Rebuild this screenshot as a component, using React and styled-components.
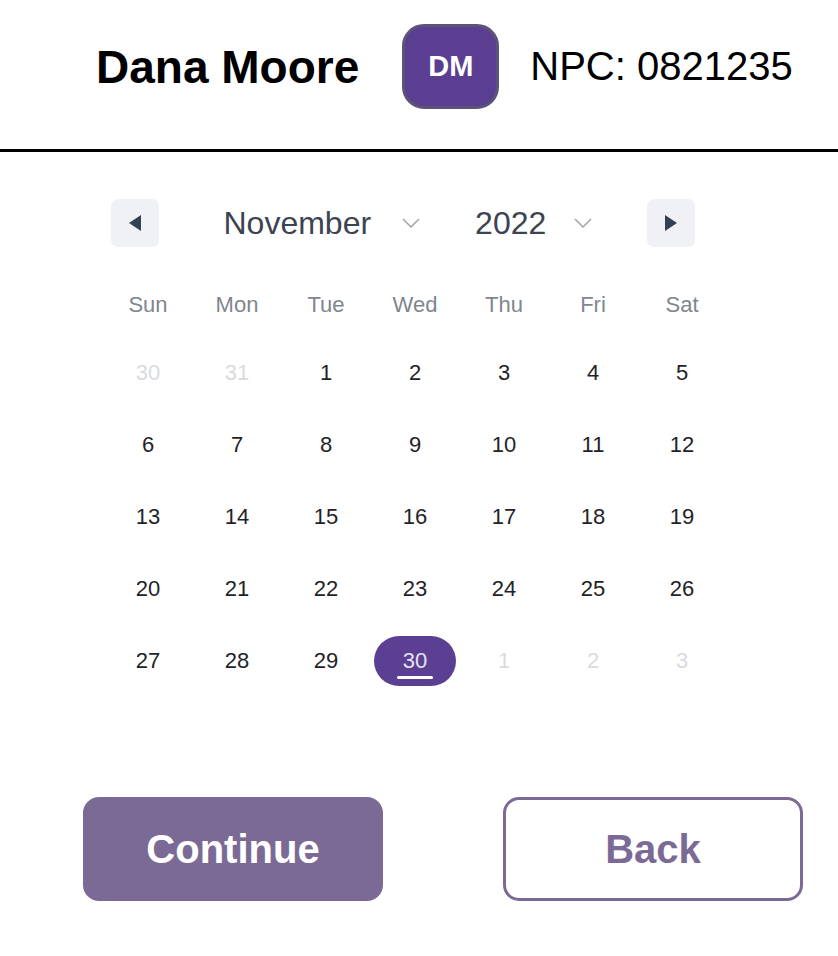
import React from 'react'
import styled, { createGlobalStyle } from 'styled-components'

const GlobalStyle = createGlobalStyle`
  body {
    margin: 0;
    background: #fff;
    font-family: "Liberation Sans", Arial, sans-serif;
  }
`

const Page = styled.div`
  width: 838px;
  min-height: 956px;
  background: #fff;
`

const Header = styled.header`
  display: flex;
  align-items: center;
  padding: 24px 0 40px 96px;
  border-bottom: 3px solid #000;
`

const Name = styled.h1`
  margin: 0 43px 0 0;
  font-size: 46px;
  font-weight: 700;
  color: #000;
`

const Avatar = styled.div`
  width: 91px;
  height: 79px;
  border: 3px solid #5c5478;
  border-radius: 22px;
  background: #5a3e91;
  color: #fff;
  font-size: 29px;
  font-weight: 700;
  display: flex;
  align-items: center;
  justify-content: center;
  margin-right: 31px;
`

const Npc = styled.div`
  font-size: 40px;
  color: #000;
`

const Calendar = styled.section`
  width: 623px;
  margin: 47px 0 0 103.5px;
`

const Nav = styled.div`
  display: flex;
  align-items: center;
  padding-left: 7px;
  height: 48px;
`

const NavButton = styled.button`
  width: 48px;
  height: 48px;
  border: none;
  border-radius: 7px;
  background: #f0f1f5;
  display: flex;
  align-items: center;
  justify-content: center;
  padding: 0;
  margin-left: ${p => p.$offset || 0}px;
  cursor: pointer;
`

const Select = styled.div`
  display: flex;
  align-items: center;
  gap: ${p => p.$gap}px;
  margin-left: ${p => p.$offset}px;
  font-size: 32px;
  color: #3d4451;
`

const Grid = styled.div`
  display: grid;
  grid-template-columns: repeat(7, 89px);
  margin-top: 40px;
`

const DayName = styled.div`
  height: 36px;
  margin-bottom: 14px;
  display: flex;
  align-items: center;
  justify-content: center;
  font-size: 22px;
  color: #7f868d;
`

const Cell = styled.div`
  height: 72px;
  display: flex;
  align-items: center;
  justify-content: center;
`

const Day = styled.span`
  position: relative;
  width: 82px;
  height: 50px;
  border-radius: 25px;
  display: flex;
  align-items: center;
  justify-content: center;
  font-size: 22px;
  color: ${p => (p.$muted ? '#d7dbe0' : p.$selected ? '#e6e1f2' : '#1f2328')};
  background: ${p => (p.$selected ? '#5b3f92' : 'transparent')};

  ${p => p.$selected && `
    &::after {
      content: '';
      position: absolute;
      left: 23px;
      right: 23px;
      bottom: 7px;
      height: 3px;
      border-radius: 2px;
      background: #fff;
    }
  `}
`

const Actions = styled.div`
  display: flex;
  gap: 120px;
  padding-left: 83px;
  margin-top: 100px;
`

const Button = styled.button`
  width: 300px;
  height: 104px;
  border-radius: 16px;
  font-family: "Liberation Sans", Arial, sans-serif;
  font-size: 40px;
  font-weight: 700;
  cursor: pointer;
  border: 3px solid #7b6a96;
  background: ${p => (p.$outline ? '#fff' : '#7b6a96')};
  color: ${p => (p.$outline ? '#7b6a96' : '#fff')};
`

const Triangle = ({ dir }) => (
  <svg width="12" height="16" viewBox="0 0 12 16">
    <path d={dir === 'left' ? 'M12 0 L0 8 L12 16 Z' : 'M0 0 L12 8 L0 16 Z'} fill="#334155" />
  </svg>
)

const Chevron = () => (
  <svg width="18" height="10" viewBox="0 0 18 10">
    <path d="M1 1 L9 9 L17 1" fill="none" stroke="#a3a8ae" strokeWidth="1.6" />
  </svg>
)

const dayNames = ['Sun', 'Mon', 'Tue', 'Wed', 'Thu', 'Fri', 'Sat']

const days = [
  { n: 30, muted: true }, { n: 31, muted: true },
  ...Array.from({ length: 30 }, (_, i) => ({ n: i + 1, selected: i === 29 })),
  { n: 1, muted: true }, { n: 2, muted: true }, { n: 3, muted: true },
]

const App = () => {
  return (
    <>
      <GlobalStyle />
      <Page>
        <Header>
          <Name>Dana Moore</Name>
          <Avatar>DM</Avatar>
          <Npc>NPC: 0821235</Npc>
        </Header>

        <Calendar>
          <Nav>
            <NavButton aria-label="Previous month"><Triangle dir="left" /></NavButton>
            <Select $offset={65} $gap={31}>November <Chevron /></Select>
            <Select $offset={55} $gap={28}>2022 <Chevron /></Select>
            <NavButton $offset={55} aria-label="Next month"><Triangle dir="right" /></NavButton>
          </Nav>

          <Grid>
            {dayNames.map(d => <DayName key={d}>{d}</DayName>)}
            {days.map((d, i) => (
              <Cell key={i}>
                <Day $muted={d.muted} $selected={d.selected}>{d.n}</Day>
              </Cell>
            ))}
          </Grid>
        </Calendar>

        <Actions>
          <Button>Continue</Button>
          <Button $outline>Back</Button>
        </Actions>
      </Page>
    </>
  )
}

export default App
